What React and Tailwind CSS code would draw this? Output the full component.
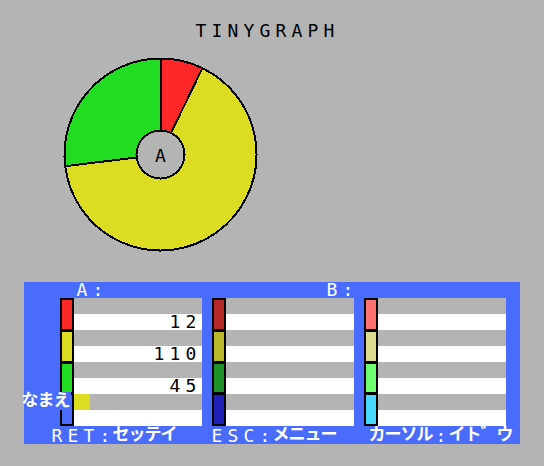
import React from "react";

const BLUE = "#4a6cfc";

// one 16px cell per character, like the MSX text grid
const Txt = ({ s, className = "" }) => (
  <div className={`flex ${className}`}>
    {[...s].map((c, i) => {
      const wide = c.charCodeAt(0) > 0x3000;
      return (
        <span
          key={i}
          className={
            wide
              ? "w-4 shrink-0 flex justify-center text-[17px] font-bold relative -top-[2px]"
              : "w-4 shrink-0 text-center"
          }
        >
          {c === " " ? "\u00a0" : c}
        </span>
      );
    })}
  </div>
);

const columns = [
  {
    strip: ["#ff2828", "#dcdc22", "#22dc22", BLUE],
    values: { 1: "12", 3: "110", 5: "45" },
    cursor: true,
  },
  { strip: ["#b82828", "#b8b828", "#209028", "#2020b8"], values: {} },
  { strip: ["#ff7070", "#dcdc90", "#70ff70", "#48d8ff"], values: {} },
];

const Pie = () => {
  const cx = 100.5;
  const cy = 98.5;
  const R = 96;
  const data = [
    { v: 12, color: "#ff2828" },
    { v: 110, color: "#dcdc22" },
    { v: 45, color: "#22dc22" },
  ];
  const total = data.reduce((a, d) => a + d.v, 0);
  const pt = (deg) => {
    const r = (deg * Math.PI) / 180;
    return [cx + R * Math.sin(r), cy - R * Math.cos(r)];
  };
  let start = 0;
  const slices = data.map((d) => {
    const end = start + (d.v / total) * 360;
    const [x1, y1] = pt(start);
    const [x2, y2] = pt(end);
    const large = end - start > 180 ? 1 : 0;
    const path = `M${cx} ${cy} L${x1} ${y1} A${R} ${R} 0 ${large} 1 ${x2} ${y2} Z`;
    start = end;
    return { path, color: d.color };
  });

  return (
    <svg width="200" height="200" viewBox="0 0 200 200" className="block ml-[60px]" shapeRendering="crispEdges">
      {slices.map((s, i) => (
        <path key={i} d={s.path} fill={s.color} stroke="#000" strokeWidth="2" strokeLinejoin="miter" />
      ))}
      <circle cx={cx} cy={cy} r="24" fill="#b4b4b4" stroke="#000" strokeWidth="2" />
      <text
        x={cx}
        y={cy + 7}
        textAnchor="middle"
        fontSize="18"
        fontFamily="DejaVu Sans Mono, monospace"
        fill="#000"
      >
        A
      </text>
    </svg>
  );
};

const Column = ({ col }) => (
  <div className="flex">
    <div className="w-[14px] h-[128px] bg-black p-[2px] flex flex-col gap-[3px]">
      {col.strip.map((c, i) => (
        <div key={i} className="flex-1" style={{ backgroundColor: c }} />
      ))}
    </div>
    <div className="w-[128px] flex flex-col text-black">
      {Array.from({ length: 8 }).map((_, i) => (
        <div
          key={i}
          className={`h-4 flex items-start ${i % 2 ? "bg-white justify-end pr-[3px]" : "bg-[#b4b4b4]"}`}
        >
          {col.values[i] && <Txt s={col.values[i]} />}
          {col.cursor && i === 6 && <div className="w-4 h-4 bg-[#dcdc22]" />}
        </div>
      ))}
    </div>
  </div>
);

export default function App() {
  return (
    <div className="w-[544px] h-[466px] bg-[#b4b4b4] overflow-hidden font-['DejaVu_Sans_Mono','Noto_Sans_CJK_JP',monospace] text-[18px] leading-4">
      <div className="h-[56px] pt-[23px] pl-[193px] text-black">
        <Txt s="TINYGRAPH" />
      </div>

      <Pie />

      <div className="relative mt-[26px] ml-[24px] w-[496px] h-[162px] bg-[#4a6cfc] text-white">
        <div className="h-4 flex pl-[50px]">
          <Txt s="A:" />
          <Txt s="B:" className="ml-[218px]" />
        </div>

        <div className="flex pl-[36px] gap-[10px]">
          {columns.map((col, i) => (
            <Column key={i} col={col} />
          ))}
        </div>

        <div className="pt-[2px] pl-[25px]">
          <Txt s="RET:セッテイ  ESC:メニュー  カーソル:イト゛ウ" />
        </div>

        {/* name label sits over the first strip */}
        <div className="absolute left-0 top-[110px] w-[47px] h-[18px] bg-[#4a6cfc] pt-[2px]">
          <Txt s="なまえ" className="-ml-[2px]" />
        </div>
      </div>
    </div>
  );
}
